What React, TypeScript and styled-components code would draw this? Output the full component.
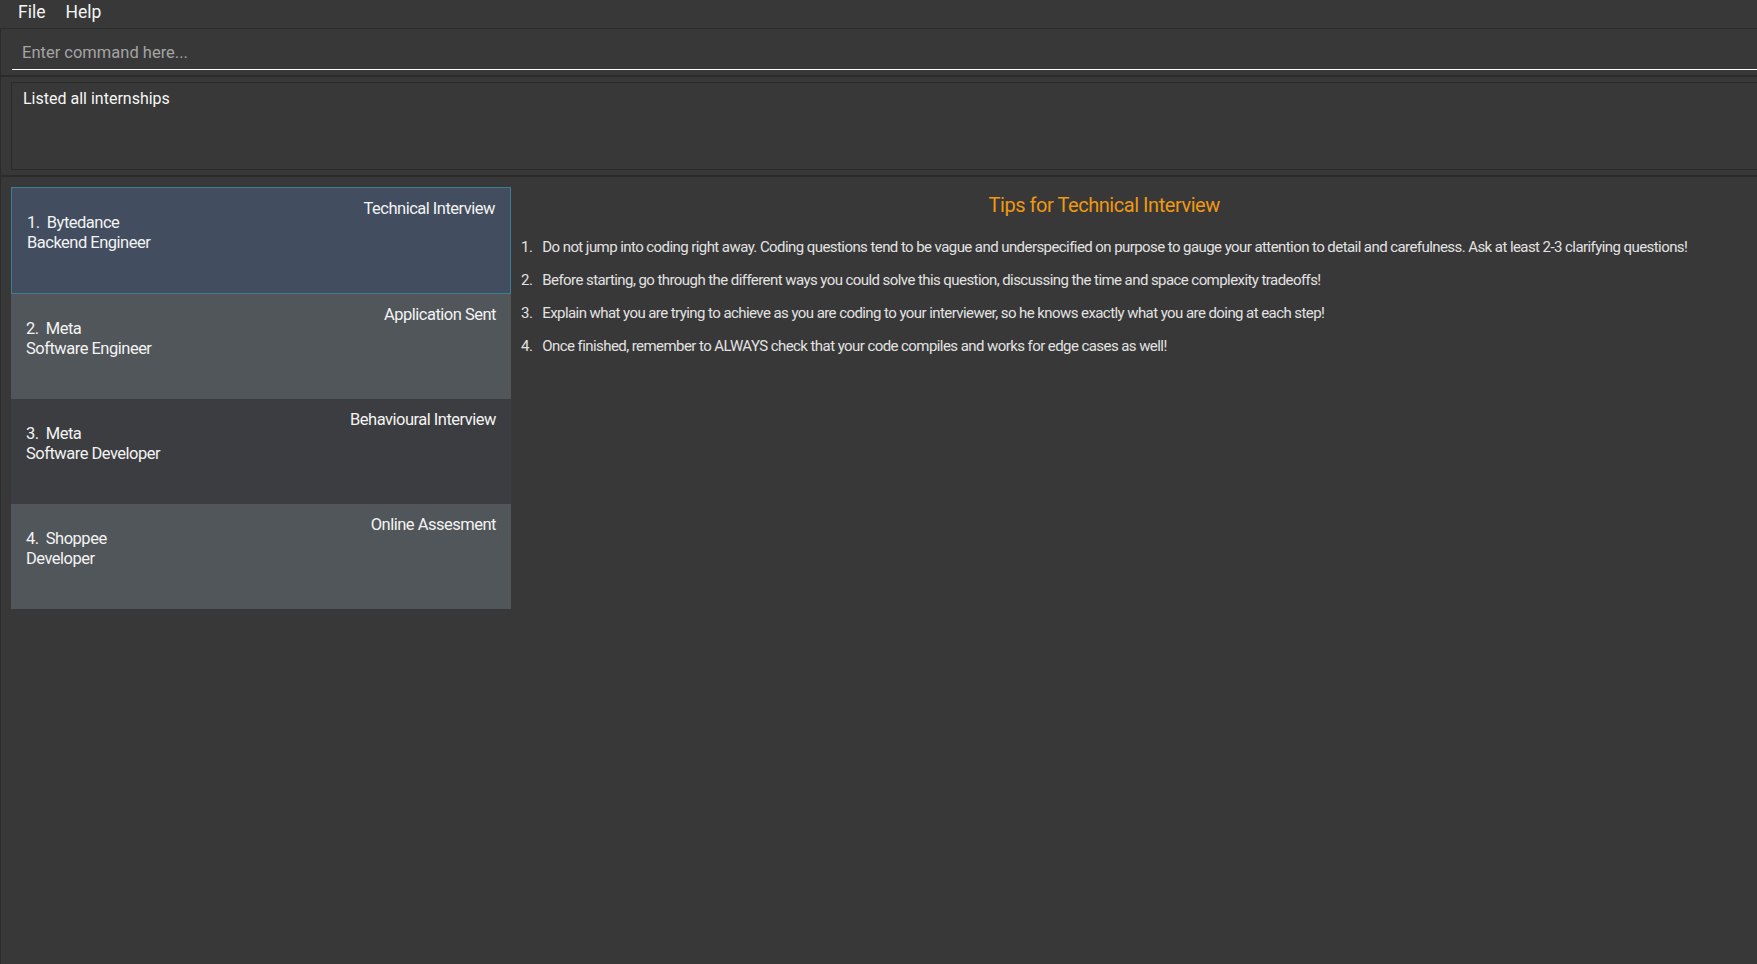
import React from "react";
import styled, { createGlobalStyle } from "styled-components";

const GlobalStyle = createGlobalStyle`
  html, body {
    margin: 0;
    padding: 0;
    background: #383838;
    overflow: hidden;
  }
  * { box-sizing: border-box; }
`;

const FONT = `Roboto, "Noto Sans", Arial, sans-serif`;

const Window = styled.div`
  width: 100%;
  height: 964px;
  background: #383838;
  display: flex;
  flex-direction: column;
  overflow: hidden;
  font-family: ${FONT};
  color: #f2f2f2;
`;

const MenuBar = styled.nav`
  height: 29px;
  flex: none;
  display: flex;
  align-items: flex-start;
  gap: 20px;
  padding: 0 0 0 18px;
  border-bottom: 1px solid #2b2b2b;
`;

const MenuItem = styled.span`
  font-size: 17.5px;
  line-height: 25px;
  color: #f4f4f4;
`;

const Body = styled.div`
  flex: 1;
  display: flex;
  flex-direction: column;
  border-left: 1px solid #2b2b2b;
  min-height: 0;
`;

const CommandPane = styled.div`
  height: 48px;
  flex: none;
  display: flex;
  align-items: flex-start;
  padding: 4px 0 0 11px;
  border-bottom: 2px solid #2b2b2b;
`;

const CommandInput = styled.input`
  flex: 1;
  height: 37px;
  margin: 0;
  padding: 2px 0 0 10px;
  border: none;
  border-bottom: 1px solid #ffffff;
  background: transparent;
  outline: none;
  font-family: ${FONT};
  font-size: 16.5px;
  color: #f2f2f2;
  &::placeholder {
    color: #a4a4a4;
  }
`;

const ResultPane = styled.div`
  height: 100px;
  flex: none;
  padding: 5px 0 0 10px;
  border-bottom: 2px solid #2b2b2b;
`;

const ResultBox = styled.div`
  height: 88px;
  margin-right: -20px;
  border: 1px solid #2b2b2b;
  padding: 6px 11px;
  font-size: 16px;
  line-height: 20px;
  color: #f6f6f6;
`;

const Main = styled.div`
  flex: 1;
  display: flex;
  align-items: flex-start;
  padding: 10px 0 0 10px;
  min-height: 0;
`;

const CardList = styled.div`
  width: 500px;
  flex: none;
  display: flex;
  flex-direction: column;
`;

const Card = styled.div<{ $bg: string; $selected?: boolean }>`
  height: ${(p) => (p.$selected ? 107 : 105)}px;
  background: ${(p) => p.$bg};
  border: ${(p) => (p.$selected ? "1px solid #3c7e92" : "none")};
  display: flex;
  justify-content: space-between;
  align-items: flex-start;
  padding: 11px 15px 0 15px;
  font-size: 16.5px;
  line-height: 20px;
  letter-spacing: -0.5px;
  color: #f3f3f3;
`;

const NameBlock = styled.div`
  margin-top: 14px;
  display: flex;
  flex-direction: column;
  white-space: pre;
`;

const Status = styled.div`
  white-space: nowrap;
`;

const DetailPanel = styled.section`
  flex: none;
  display: flex;
  flex-direction: column;
  padding: 6px 0 0 10px;
`;

const DetailTitle = styled.h2`
  margin: 0;
  align-self: center;
  font-size: 20px;
  line-height: 24px;
  font-weight: 400;
  letter-spacing: -0.45px;
  color: #f09812;
`;

const TipList = styled.ol`
  list-style: none;
  margin: 14px 0 0 0;
  padding: 0;
`;

const TipRow = styled.li`
  display: flex;
  height: 33px;
  line-height: 33px;
  font-size: 15px;
  letter-spacing: -0.57px;
  color: #e2e2e2;
  white-space: nowrap;
`;

const TipNumber = styled.span`
  margin-right: 10px;
`;

const internships = [
  { idx: 1, company: "Bytedance", role: "Backend Engineer", status: "Technical Interview", bg: "#424d5f", selected: true },
  { idx: 2, company: "Meta", role: "Software Engineer", status: "Application Sent", bg: "#51565a" },
  { idx: 3, company: "Meta", role: "Software Developer", status: "Behavioural Interview", bg: "#3c3d40" },
  { idx: 4, company: "Shoppee", role: "Developer", status: "Online Assesment", bg: "#51565a" },
];

const tips = [
  "Do not jump into coding right away. Coding questions tend to be vague and underspecified on purpose to gauge your attention to detail and carefulness. Ask at least 2-3 clarifying questions!",
  "Before starting, go through the different ways you could solve this question, discussing the time and space complexity tradeoffs!",
  "Explain what you are trying to achieve as you are coding to your interviewer, so he knows exactly what you are doing at each step!",
  "Once finished, remember to ALWAYS check that your code compiles and works for edge cases as well!",
];

export default function App() {
  return (
    <>
      <GlobalStyle />
      <Window>
        <MenuBar>
          <MenuItem>File</MenuItem>
          <MenuItem>Help</MenuItem>
        </MenuBar>
        <Body>
          <CommandPane>
            <CommandInput placeholder="Enter command here..." />
          </CommandPane>
          <ResultPane>
            <ResultBox>Listed all internships</ResultBox>
          </ResultPane>
          <Main>
            <CardList>
              {internships.map((it) => (
                <Card key={it.idx} $bg={it.bg} $selected={it.selected}>
                  <NameBlock>
                    <span>{`${it.idx}.  ${it.company}`}</span>
                    <span>{it.role}</span>
                  </NameBlock>
                  <Status>{it.status}</Status>
                </Card>
              ))}
            </CardList>
            <DetailPanel>
              <DetailTitle>Tips for Technical Interview</DetailTitle>
              <TipList>
                {tips.map((t, i) => (
                  <TipRow key={i}>
                    <TipNumber>{i + 1}.</TipNumber>
                    <span>{t}</span>
                  </TipRow>
                ))}
              </TipList>
            </DetailPanel>
          </Main>
        </Body>
      </Window>
    </>
  );
}
